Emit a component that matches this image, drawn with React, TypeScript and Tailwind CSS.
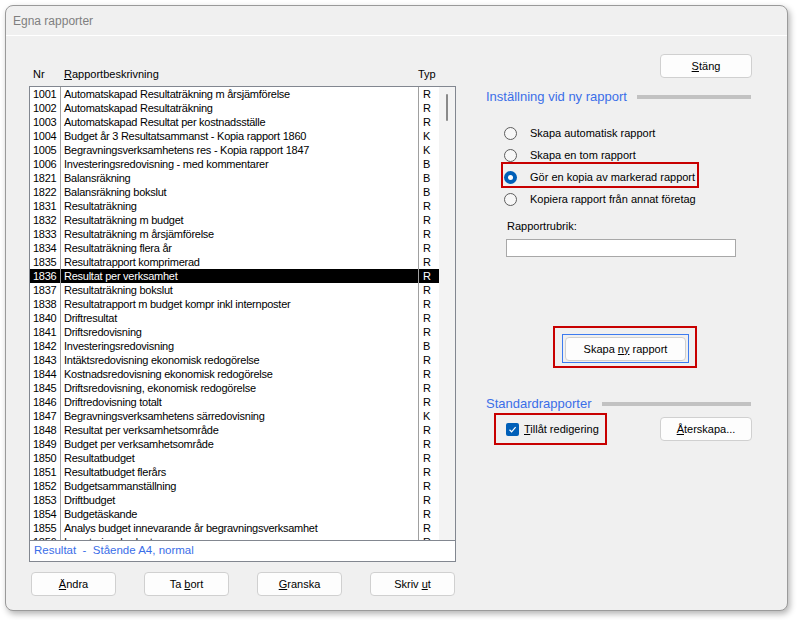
import React from 'react'

const rows: [string, string, string][] = [
  ['1001', 'Automatskapad Resultaträkning m årsjämförelse', 'R'],
  ['1002', 'Automatskapad Resultaträkning', 'R'],
  ['1003', 'Automatskapad Resultat per kostnadsställe', 'R'],
  ['1004', 'Budget år 3 Resultatsammanst - Kopia rapport 1860', 'K'],
  ['1005', 'Begravningsverksamhetens res - Kopia rapport 1847', 'K'],
  ['1006', 'Investeringsredovisning - med kommentarer', 'B'],
  ['1821', 'Balansräkning', 'B'],
  ['1822', 'Balansräkning bokslut', 'B'],
  ['1831', 'Resultaträkning', 'R'],
  ['1832', 'Resultaträkning m budget', 'R'],
  ['1833', 'Resultaträkning m årsjämförelse', 'R'],
  ['1834', 'Resultaträkning flera år', 'R'],
  ['1835', 'Resultatrapport komprimerad', 'R'],
  ['1836', 'Resultat per verksamhet', 'R'],
  ['1837', 'Resultaträkning bokslut', 'R'],
  ['1838', 'Resultatrapport m budget kompr inkl internposter', 'R'],
  ['1840', 'Driftresultat', 'R'],
  ['1841', 'Driftsredovisning', 'R'],
  ['1842', 'Investeringsredovisning', 'B'],
  ['1843', 'Intäktsredovisning ekonomisk redogörelse', 'R'],
  ['1844', 'Kostnadsredovisning ekonomisk redogörelse', 'R'],
  ['1845', 'Driftsredovisning, ekonomisk redogörelse', 'R'],
  ['1846', 'Driftredovisning totalt', 'R'],
  ['1847', 'Begravningsverksamhetens särredovisning', 'K'],
  ['1848', 'Resultat per verksamhetsområde', 'R'],
  ['1849', 'Budget per verksamhetsområde', 'R'],
  ['1850', 'Resultatbudget', 'R'],
  ['1851', 'Resultatbudget flerårs', 'R'],
  ['1852', 'Budgetsammanställning', 'R'],
  ['1853', 'Driftbudget', 'R'],
  ['1854', 'Budgetäskande', 'R'],
  ['1855', 'Analys budget innevarande år begravningsverksamhet', 'R'],
  ['1856', 'Investeringsbudget', 'R'],
]

const SELECTED = '1836'

function WinButton({ children, className = '' }: { children: React.ReactNode; className?: string }) {
  return (
    <button
      className={`flex items-center justify-center h-[24px] rounded-[4px] border border-[#d0d0d0] bg-[#fdfdfd] text-[11px] text-black ${className}`}
    >
      {children}
    </button>
  )
}

function Radio({ checked, label }: { checked?: boolean; label: string }) {
  return (
    <div className="flex items-center gap-[13px] h-[22px] pl-[18px]">
      {checked ? (
        <span className="flex items-center justify-center w-[13px] h-[13px] rounded-full bg-[#005fb8]">
          <span className="w-[5px] h-[5px] rounded-full bg-white" />
        </span>
      ) : (
        <span className="w-[13px] h-[13px] rounded-full border border-[#5d5d5d] bg-[#f7f7f7]" />
      )}
      <span className="text-[11px] text-black">{label}</span>
    </div>
  )
}

function SectionHeading({ title }: { title: string }) {
  return (
    <div className="flex items-center h-[16px]">
      <span className="text-[13px] text-[#3b6ee8] whitespace-nowrap">{title}</span>
      <div className="flex-1 ml-[10px] mr-[1px] h-[4px] bg-[#c2c2c2]" />
    </div>
  )
}

export default function App() {
  return (
    <div
      className="w-[799px] h-[620px] bg-white pt-[5px] pl-[5px]"
      style={{ fontFamily: '"Liberation Sans", Arial, sans-serif' }}
    >
      <div className="w-[783px] h-[606px] rounded-[8px] border border-[#9a9a9a] bg-[#f0f0f0] shadow-[2px_3px_6px_rgba(0,0,0,0.3)] overflow-hidden flex flex-col">
        {/* title bar */}
        <div className="h-[30px] shrink-0 flex items-center pl-[7px] text-[12px] text-[#7f7f7f] border-b border-white">
          Egna rapporter
        </div>

        <div className="flex pl-[23px]">
          {/* left: report list */}
          <div className="w-[427px] flex flex-col">
            <div className="flex h-[14px] mt-[31px] mb-[5px] text-[11px] leading-[14px] text-black">
              <span className="w-[35px] pl-[4px]">Nr</span>
              <span className="flex-1">
                <span className="underline">R</span>apportbeskrivning
              </span>
              <span className="w-[38px]">Typ</span>
            </div>

            <div className="border border-[#828790] bg-white">
              <div className="flex h-[454px] border-b border-[#828790] overflow-hidden">
                <div className="flex-1 flex flex-col overflow-hidden">
                  {rows.map(([nr, desc, typ]) => {
                    const sel = nr === SELECTED
                    return (
                      <div
                        key={nr}
                        className={`flex shrink-0 h-[14px] text-[11px] leading-[14px] tracking-[-0.25px] ${
                          sel ? 'bg-black text-white' : 'text-black'
                        }`}
                      >
                        <span className="w-[31px] pl-[3px] border-r border-[#a0a0a0]">{nr}</span>
                        <span className="flex-1 pl-[3px] border-r border-[#a0a0a0] whitespace-nowrap overflow-hidden">
                          {desc}
                        </span>
                        <span className="w-[20px] pl-[4px]">{typ}</span>
                      </div>
                    )
                  })}
                </div>
                <div className="w-[16px] bg-[#f3f3f3] pt-[7px] pl-[7px]">
                  <div className="w-[2px] h-[27px] rounded-full bg-[#8a8a8a]" />
                </div>
              </div>
              <div className="h-[20px] flex items-center pl-[4px] text-[11.5px] text-[#3b6ee8] whitespace-pre">
                {'Resultat  -  Stående A4, normal'}
              </div>
            </div>

            <div className="flex justify-between ml-[2px] w-[424px] mt-[10px]">
              <WinButton className="w-[85px]">
                <span className="underline">Ä</span>ndra
              </WinButton>
              <WinButton className="w-[85px]">
                Ta&nbsp;<span className="underline">b</span>ort
              </WinButton>
              <WinButton className="w-[85px]">
                <span className="underline">G</span>ranska
              </WinButton>
              <WinButton className="w-[85px]">
                Skriv&nbsp;<span className="underline">u</span>t
              </WinButton>
            </div>
          </div>

          {/* right: settings */}
          <div className="ml-[30px] w-[266px] flex flex-col">
            <WinButton className="w-[92px] self-end mt-[18px]">
              <span className="underline">S</span>täng
            </WinButton>

            <div className="mt-[11px]">
              <SectionHeading title="Inställning vid ny rapport" />
            </div>

            <div className="mt-[17px] flex flex-col">
              <Radio label="Skapa automatisk rapport" />
              <Radio label="Skapa en tom rapport" />
              <div className="relative">
                <Radio checked label="Gör en kopia av markerad rapport" />
                <div className="absolute left-[15px] top-[-4px] w-[198px] h-[26px] border-2 border-[#c80000]" />
              </div>
              <Radio label="Kopiera rapport från annat företag" />
            </div>

            <div className="mt-[9px] ml-[21px] h-[14px] text-[11px] leading-[14px] text-black">Rapportrubrik:</div>
            <div className="mt-[6px] ml-[20px] w-[230px] h-[18px] border border-[#a8a8a8] bg-white" />

            <div className="mt-[69px] ml-[67px] w-[144px] h-[42px] border-2 border-[#c80000] pt-[6px] pl-[7px]">
              <div className="w-[127px] h-[29px] border border-[#3c7bf0] p-[2px]">
                <WinButton className="w-[121px] h-[23px]">
                  Skapa&nbsp;<span className="underline">ny</span>&nbsp;rapport
                </WinButton>
              </div>
            </div>

            <div className="mt-[28px]">
              <SectionHeading title="Standardrapporter" />
            </div>

            <div className="mt-[1px] flex items-center justify-between">
              <div className="ml-[8px] w-[113px] h-[32px] border-2 border-[#c80000] flex items-center pl-[10px] gap-[5px]">
                <span className="flex items-center justify-center w-[13px] h-[13px] rounded-[2px] bg-[#005fb8]">
                  <svg width="9" height="9" viewBox="0 0 9 9" fill="none">
                    <path d="M1.5 4.8 L3.6 6.8 L7.6 2.2" stroke="white" strokeWidth="1.2" />
                  </svg>
                </span>
                <span className="text-[11px] text-black whitespace-nowrap">
                  <span className="underline">T</span>illåt redigering
                </span>
              </div>
              <WinButton className="w-[92px] h-[23px]">
                <span className="underline">Å</span>terskapa...
              </WinButton>
            </div>
          </div>
        </div>
      </div>
    </div>
  )
}
